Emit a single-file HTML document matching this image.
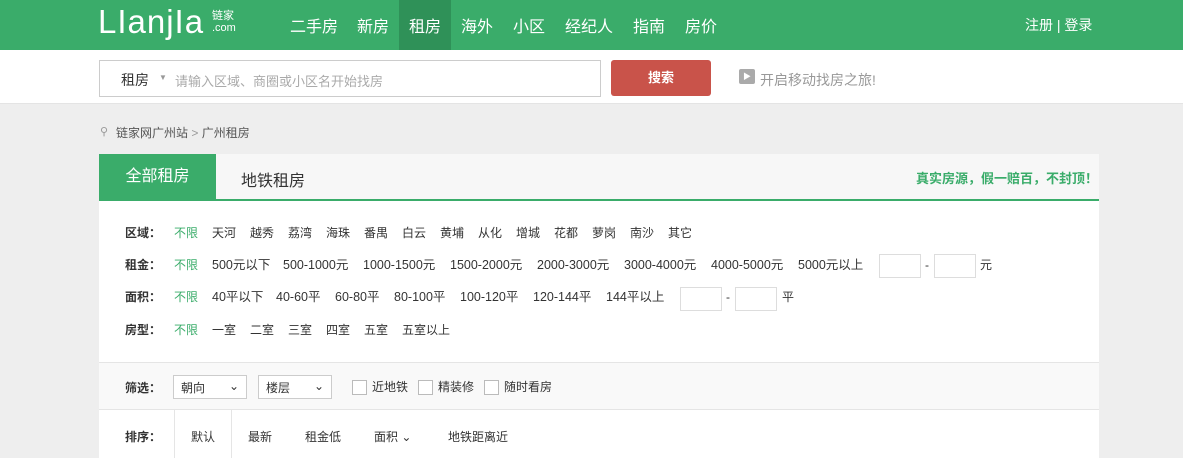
<html><head><style>
*{margin:0;padding:0;box-sizing:border-box}
body{width:1183px;height:458px;overflow:hidden;background:#eee;font-family:"Liberation Sans","Noto Sans CJK SC",sans-serif;font-size:12px;color:#333;position:relative}
.a{position:absolute;white-space:nowrap}
.hd{left:0;top:0;width:1183px;height:50px;background:#3aac6a}
.nav{color:#fff;font-size:16px;top:13px}
.sb{left:0;top:50px;width:1183px;height:54px;background:#fff;border-bottom:1px solid #e4e4e4}
.g{color:#3aac6a}
.box{position:absolute;width:42px;height:24px;border:1px solid #ddd;background:#fff}
.chk{display:inline-block;width:15px;height:15px;border:1px solid #bbb;background:#fff;vertical-align:middle;margin-right:5px}
.sel{position:absolute;top:375px;height:24px;border:1px solid #ccc;background:#fff;font-size:12px;padding:3px 7px}
.lb{font-weight:bold}
.n{font-size:12.5px;line-height:17px}
.r{line-height:17px}
</style></head><body>
<div class="a hd"></div>
<div class="a" style="left:98px;top:4px;color:#fff;font-size:33px;letter-spacing:1px;line-height:36px">LIanjIa</div>
<div class="a" style="left:212px;top:10px;color:#fff;font-size:11px;line-height:12px">链家<br>.com</div>
<div class="a" style="left:399px;top:0;width:52px;height:50px;background:#2f9158"></div>
<div class="a nav" style="left:290px">二手房</div>
<div class="a nav" style="left:357px">新房</div>
<div class="a nav" style="left:409px">租房</div>
<div class="a nav" style="left:461px">海外</div>
<div class="a nav" style="left:513px">小区</div>
<div class="a nav" style="left:565px">经纪人</div>
<div class="a nav" style="left:633px">指南</div>
<div class="a nav" style="left:685px">房价</div>
<div class="a" style="left:1025px;top:15px;color:#fff;font-size:14px">注册 | 登录</div>
<div class="a sb"></div>
<div class="a" style="left:99px;top:60px;width:502px;height:37px;border:1px solid #ccc;background:#fff"></div>
<div class="a" style="left:121px;top:70px;font-size:14px">租房</div>
<div class="a" style="left:159px;top:73px;font-size:8px;color:#999">▼</div>
<div class="a" style="left:175px;top:71px;font-size:13px;color:#aaa">请输入区域、商圈或小区名开始找房</div>
<div class="a" style="left:611px;top:60px;width:100px;height:36px;background:#c9534a;border-radius:3px;color:#fff;font-size:13px;font-weight:bold;text-align:center;line-height:36px">搜索</div>
<div class="a" style="left:739px;top:69px;width:16px;height:15px;background:#aaa;border-radius:2px;color:#fff;font-size:8px;text-align:center;line-height:15px">▶</div>
<div class="a" style="left:760px;top:70px;font-size:14px;color:#999">开启移动找房之旅!</div>
<div class="a" style="left:100px;top:125px;color:#999;font-size:11px">⚲</div>
<div class="a" style="left:116px;top:124px;color:#555">链家网广州站 <span style="color:#999">&gt;</span> 广州租房</div>
<div class="a" style="left:99px;top:154px;width:1000px;height:304px;background:#fff"></div>
<div class="a" style="left:99px;top:154px;width:1000px;height:47px;background:#f7f7f7;border-bottom:2px solid #3aac6a"></div>
<div class="a" style="left:99px;top:154px;width:117px;height:47px;background:#3aac6a;color:#fff;font-size:16px;text-align:center;line-height:46px">全部租房</div>
<div class="a" style="left:241px;top:167px;font-size:16px;color:#333">地铁租房</div>
<div class="a" style="left:916px;top:168px;font-size:13px;font-weight:bold;color:#3aac6a">真实房源，假一赔百，不封顶！</div>

<div class="a lb r" style="left:125px;top:225px">区域：</div>
<div class="a g r" style="left:174px;top:225px">不限</div>
<div class="a r" style="left:212px;top:225px">天河</div><div class="a r" style="left:250px;top:225px">越秀</div><div class="a r" style="left:288px;top:225px">荔湾</div><div class="a r" style="left:326px;top:225px">海珠</div><div class="a r" style="left:364px;top:225px">番禺</div><div class="a r" style="left:402px;top:225px">白云</div><div class="a r" style="left:440px;top:225px">黄埔</div><div class="a r" style="left:478px;top:225px">从化</div><div class="a r" style="left:516px;top:225px">增城</div><div class="a r" style="left:554px;top:225px">花都</div><div class="a r" style="left:592px;top:225px">萝岗</div><div class="a r" style="left:630px;top:225px">南沙</div><div class="a r" style="left:668px;top:225px">其它</div>

<div class="a lb r" style="left:125px;top:257px">租金：</div>
<div class="a g r" style="left:174px;top:257px">不限</div>
<div class="a n" style="left:212px;top:257px">500元以下</div><div class="a n" style="left:283px;top:257px">500-1000元</div><div class="a n" style="left:363px;top:257px">1000-1500元</div><div class="a n" style="left:450px;top:257px">1500-2000元</div><div class="a n" style="left:537px;top:257px">2000-3000元</div><div class="a n" style="left:624px;top:257px">3000-4000元</div><div class="a n" style="left:711px;top:257px">4000-5000元</div><div class="a n" style="left:798px;top:257px">5000元以上</div>
<div class="box" style="left:879px;top:254px"></div><div class="a r" style="left:925px;top:257px">-</div><div class="box" style="left:934px;top:254px"></div><div class="a r" style="left:980px;top:257px">元</div>

<div class="a lb r" style="left:125px;top:289px">面积：</div>
<div class="a g r" style="left:174px;top:289px">不限</div>
<div class="a n" style="left:212px;top:289px">40平以下</div><div class="a n" style="left:276px;top:289px">40-60平</div><div class="a n" style="left:335px;top:289px">60-80平</div><div class="a n" style="left:394px;top:289px">80-100平</div><div class="a n" style="left:460px;top:289px">100-120平</div><div class="a n" style="left:533px;top:289px">120-144平</div><div class="a n" style="left:606px;top:289px">144平以上</div>
<div class="box" style="left:680px;top:287px"></div><div class="a r" style="left:726px;top:289px">-</div><div class="box" style="left:735px;top:287px"></div><div class="a r" style="left:782px;top:289px">平</div>

<div class="a lb r" style="left:125px;top:322px">房型：</div>
<div class="a g r" style="left:174px;top:322px">不限</div>
<div class="a r" style="left:212px;top:322px">一室</div><div class="a r" style="left:250px;top:322px">二室</div><div class="a r" style="left:288px;top:322px">三室</div><div class="a r" style="left:326px;top:322px">四室</div><div class="a r" style="left:364px;top:322px">五室</div><div class="a r" style="left:402px;top:322px">五室以上</div>

<div class="a" style="left:99px;top:362px;width:1000px;height:48px;background:#f9f9f9;border-top:1px solid #e5e5e5;border-bottom:1px solid #e5e5e5"></div>
<div class="a lb" style="left:125px;top:379px">筛选：</div>
<div class="sel" style="left:173px;width:74px">朝向<span style="float:right">⌄</span></div>
<div class="sel" style="left:258px;width:74px">楼层<span style="float:right">⌄</span></div>
<div class="a" style="left:352px;top:378px"><span class="chk"></span>近地铁 &nbsp;&nbsp;<span class="chk"></span>精装修 &nbsp;&nbsp;<span class="chk"></span>随时看房</div>
<div class="a" style="left:174px;top:410px;width:58px;height:48px;border-left:1px solid #e5e5e5;border-right:1px solid #e5e5e5"></div>
<div class="a lb" style="left:125px;top:428px">排序：</div>
<div class="a" style="left:191px;top:428px">默认</div>
<div class="a" style="left:248px;top:428px">最新</div>
<div class="a" style="left:305px;top:428px">租金低</div>
<div class="a" style="left:374px;top:428px">面积 ⌄</div>
<div class="a" style="left:448px;top:428px">地铁距离近</div>
</body></html>
